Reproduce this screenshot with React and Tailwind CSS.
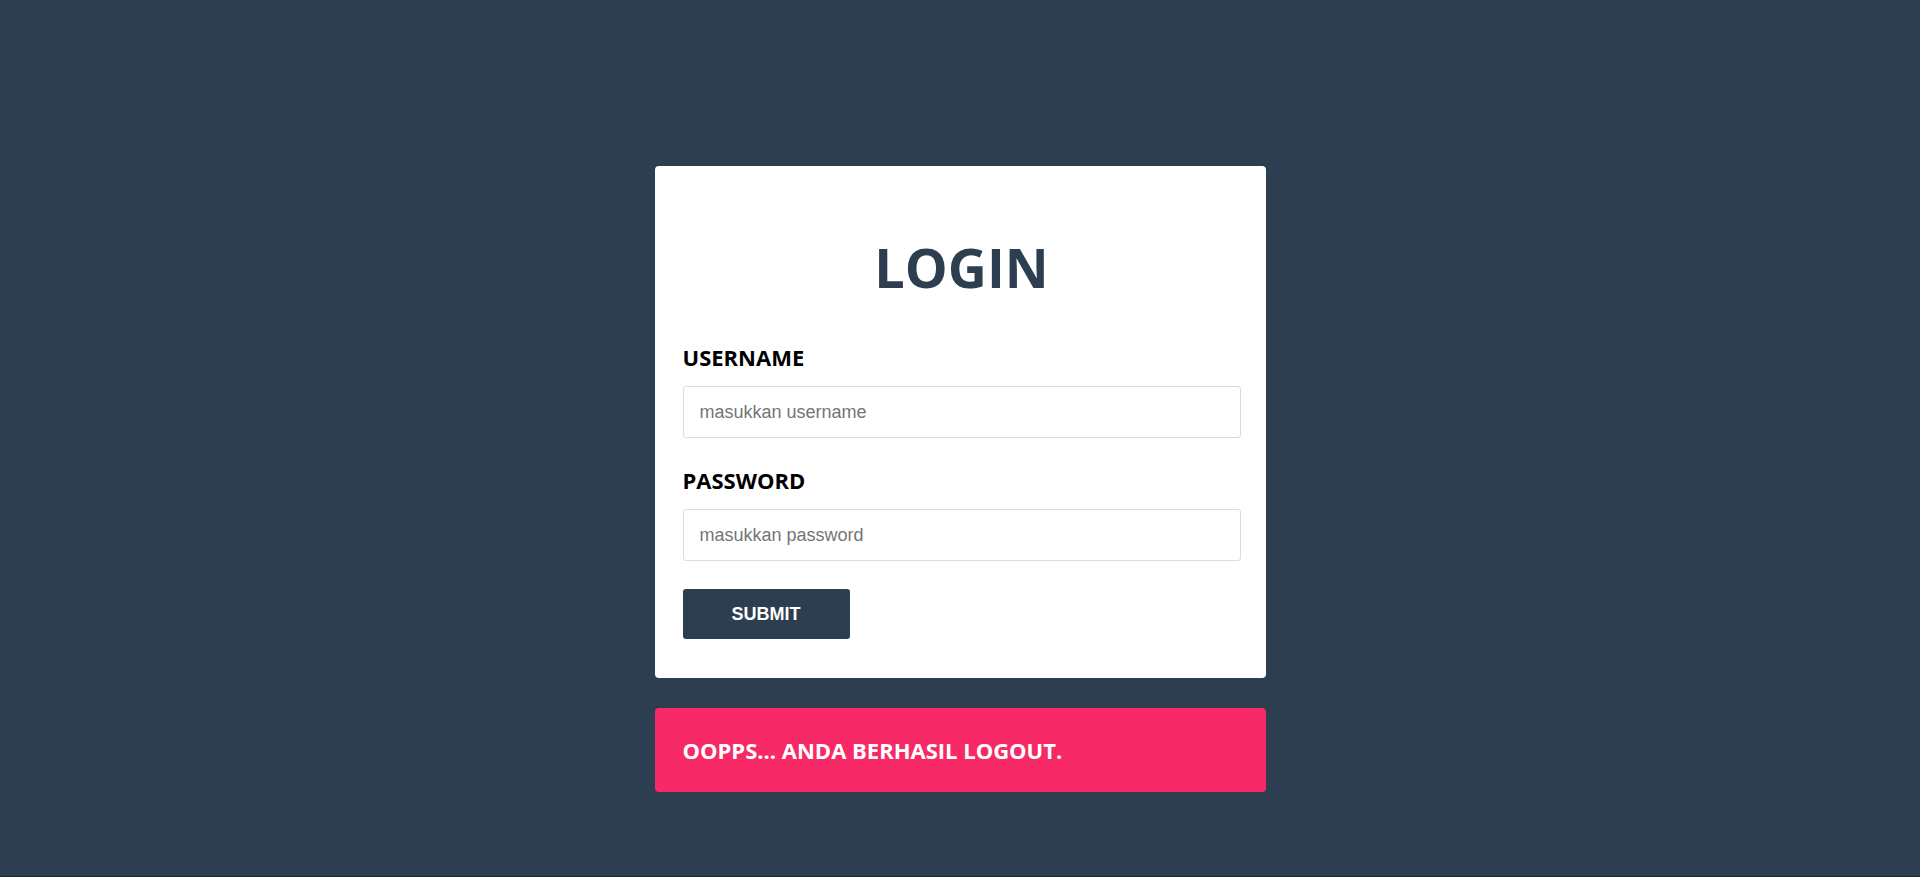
import React from 'react';

const FIELDS = [
  { id: 'username', label: 'USERNAME', type: 'text', placeholder: 'masukkan username' },
  { id: 'password', label: 'PASSWORD', type: 'password', placeholder: 'masukkan password' },
];

export default function App() {
  return (
    <div className="min-h-[877px] bg-[#2c3e50] border-b border-[#1e2833] flex flex-col items-center pt-[166px] font-['Open_Sans',sans-serif]">
      <form
        className="w-[611px] bg-white rounded-[4px] pl-[28px] pr-[25px] pt-[74px] pb-[39px] flex flex-col"
        onSubmit={(e) => e.preventDefault()}
      >
        <h1 className="text-center text-[54px] leading-none font-bold text-[#2c3e50]">LOGIN</h1>

        {FIELDS.map((f, i) => (
          <div key={f.id} className={i === 0 ? 'mt-[49px]' : 'mt-[28px]'}>
            <label htmlFor={f.id} className="block text-[22px] leading-[28px] font-bold text-black mb-[15px]">
              {f.label}
            </label>
            <input
              id={f.id}
              type={f.type}
              placeholder={f.placeholder}
              className="w-full h-[52px] border border-[#dcdcdc] rounded-[3px] px-[16px] text-[18px] font-['Liberation_Sans',Arial,sans-serif] text-black placeholder:text-[#757575] outline-none"
            />
          </div>
        ))}

        <div className="mt-[28px]">
          <button
            type="submit"
            className="w-[167px] h-[50px] bg-[#2c3e50] rounded-[3px] text-white text-[18px] font-bold font-['Liberation_Sans',Arial,sans-serif]"
          >
            SUBMIT
          </button>
        </div>
      </form>

      <div className="w-[611px] h-[84px] mt-[30px] bg-[#f72a67] rounded-[4px] px-[28px] flex items-center">
        <p className="text-white text-[22px] font-bold">OOPPS... ANDA BERHASIL LOGOUT.</p>
      </div>
    </div>
  );
}
